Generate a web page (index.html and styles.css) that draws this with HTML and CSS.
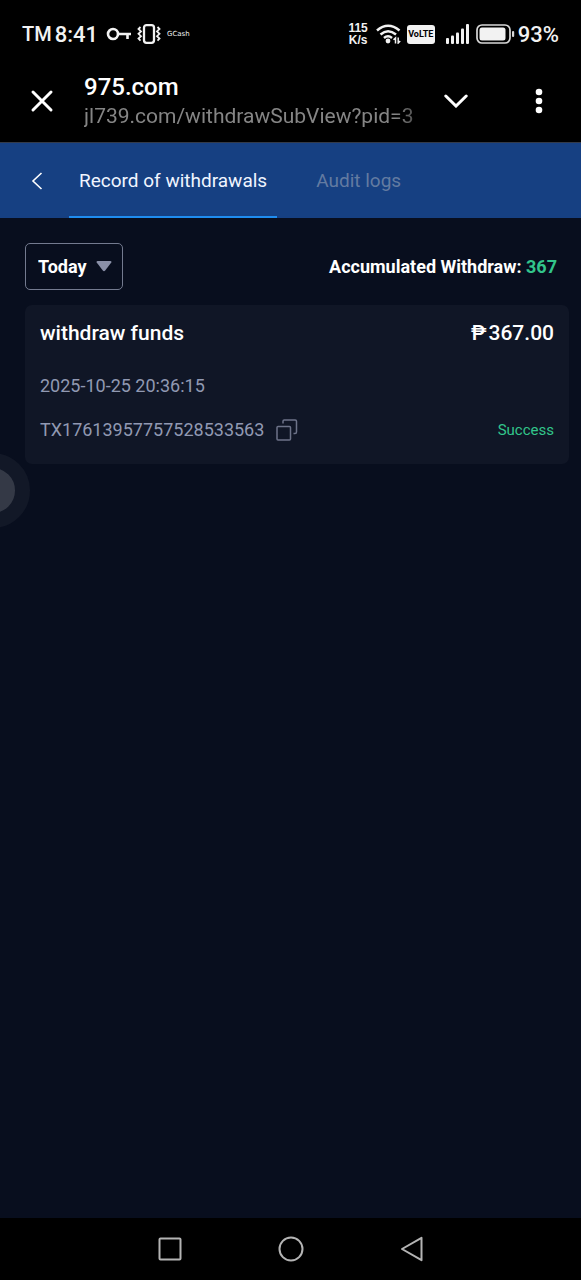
FILE: index.html
```html
<!DOCTYPE html>
<html lang="en">
<head>
<meta charset="utf-8">
<meta name="viewport" content="width=device-width, initial-scale=1">
<title>Record of withdrawals</title>
<link rel="stylesheet" href="styles.css">
</head>
<body>
<div class="screen">
  <div class="status-bar">
    <div class="status-left">
      <span class="carrier">TM</span>
      <span class="clock">8:41</span>
      <svg class="icon-key" width="26" height="14" viewBox="0 0 26 14" fill="none" stroke="#f2f2f2" stroke-width="2.6"><circle cx="7" cy="7" r="5"/><path d="M12 7H25M21.500 7v5"/></svg>
      <svg class="icon-vibrate" width="24" height="20" viewBox="0 0 24 20" fill="none" stroke="#f2f2f2"><rect x="7" y="1.200" width="10" height="17.600" rx="2.500" stroke-width="2.300"/><path d="M3.500 3l-2 2 2.500 2.400-2.500 2.400 2.500 2.400-2.500 2.400 2 2M20.500 3l2 2-2.500 2.400 2.500 2.400-2.500 2.400 2.500 2.400-2 2" stroke-width="1.800"/></svg>
      <span class="notice">GCash</span>
    </div>
    <div class="status-right">
      <span class="speed"><span>115</span><span>K/s</span></span>
      <svg class="icon-wifi" width="26" height="20" viewBox="0 0 26 20" fill="none" stroke="#f2f2f2" stroke-width="2.500"><path d="M1 6.500Q12 -3 23.500 6.500M4.500 10.500Q12 4 20 10.500M8 14Q12 10.500 16 14"/><circle cx="12" cy="17" r="2.400" fill="#f2f2f2" stroke="none"/><path d="M17.500 15.800l2-1.800v5.500M22.200 13.500v5.500l2-2" stroke-width="1.500"/></svg>
      <span class="volte">VoLTE</span>
      <svg class="icon-signal" width="23" height="20" viewBox="0 0 23 20" fill="#f2f2f2"><rect y="14" width="3" height="6" rx="1"/><rect x="5" y="11.500" width="3" height="8.500" rx="1"/><rect x="10" y="8.500" width="3" height="11.500" rx="1"/><rect x="15" y="4.500" width="3" height="15.500" rx="1"/><rect x="20" width="3" height="20" rx="1"/></svg>
      <svg class="icon-battery" width="39" height="20" viewBox="0 0 39 20"><rect x="1" y="1" width="33" height="18" rx="5" fill="none" stroke="#d8d8d8" stroke-width="1.700"/><rect x="3.500" y="3.500" width="26" height="13" rx="2.500" fill="#f2f2f2"/><rect x="36" y="7" width="2.200" height="6" rx="1" fill="#d8d8d8"/></svg>
      <span class="percent">93%</span>
    </div>
  </div>

  <header class="browser-bar">
    <button class="icon-button" aria-label="Close"><svg width="24" height="24" viewBox="0 0 24 24" fill="none" stroke="#fff" stroke-width="3" stroke-linecap="round"><path d="M3 3l18 18M21 3L3 21"/></svg></button>
    <div class="page-info">
      <div class="page-title">975.com</div>
      <div class="page-url">jl739.com/withdrawSubView?pid=3</div>
    </div>
    <button class="icon-button expand" aria-label="Expand"><svg width="24" height="14" viewBox="0 0 24 14" fill="none" stroke="#fff" stroke-width="3" stroke-linecap="round"><path d="M1.800 2L12 12 22.200 2"/></svg></button>
    <button class="icon-button" aria-label="More options"><svg width="8" height="26" viewBox="0 0 8 26" fill="#fff"><circle cx="4" cy="4" r="3.300"/><circle cx="4" cy="13" r="3.300"/><circle cx="4" cy="22" r="3.300"/></svg></button>
  </header>

  <nav class="tabs">
    <button class="back" aria-label="Back"><svg width="12" height="18" viewBox="0 0 12 18" fill="none" stroke="#fff" stroke-width="1.600"><path d="M10.500 1L2 9l8.500 8"/></svg></button>
    <button class="tab active">Record of withdrawals</button>
    <button class="tab">Audit logs</button>
  </nav>

  <main class="content">
    <div class="filters">
      <div class="period">
        <select class="period-select" aria-label="Period"><option>Today</option><option>Yesterday</option></select>
        <svg class="caret" width="16" height="11" viewBox="0 0 16 11" fill="#8a90a8"><path d="M1.500 0h13q1.500.3.800 1.600L9.200 9.500q-1.200 1.300-2.400 0L.7 1.600Q0 .3 1.500 0z"/></svg>
      </div>
      <p class="total">Accumulated Withdraw: <span class="amount">367</span></p>
    </div>

    <article class="record">
      <div class="row heading"><h2 class="kind">withdraw funds</h2><span class="sum"><span>₱</span><span>367.00</span></span></div>
      <time class="date">2025-10-25 20:36:15</time>
      <div class="row">
        <div class="reference"><span>TX17613957757528533563</span>
          <button class="copy" aria-label="Copy transaction number"><svg width="22" height="22" viewBox="0 0 22 22" fill="none" stroke="#6d7389" stroke-width="1.500"><rect x="1" y="7.500" width="13.500" height="13.500" rx="1"/><path d="M7 4.500V2.200Q7 1 8.200 1H19.200Q20.500 1 20.500 2.200V13Q20.500 14.500 19 14.500H17.500"/></svg></button>
        </div>
        <span class="state">Success</span>
      </div>
    </article>
  </main>

  <div class="system-nav">
    <button class="icon-button" aria-label="Recent apps"><svg width="26" height="26" viewBox="0 0 26 26" fill="none" stroke="#b4b4b4" stroke-width="2"><rect x="2.500" y="2.500" width="21" height="21" rx="1"/></svg></button>
    <button class="icon-button" aria-label="Home"><svg width="26" height="26" viewBox="0 0 26 26" fill="none" stroke="#b4b4b4" stroke-width="2"><circle cx="13" cy="13" r="11.500"/></svg></button>
    <button class="icon-button" aria-label="Go back"><svg width="26" height="26" viewBox="0 0 26 26" fill="none" stroke="#b4b4b4" stroke-width="2" stroke-linejoin="round"><path d="M22.500 1.800v22.400L3 13z"/></svg></button>
  </div>
  <button class="assist" aria-label="Assistive menu"></button>
</div>
</body>
</html>
```

FILE: styles.css
```css
* { box-sizing: border-box; }
body { margin: 0; background: #080e1e; color: #fff; font-family: Roboto, sans-serif; }
button { border: 0; padding: 0; background: none; color: inherit; font: inherit; }
svg { display: block; flex: none; }

.screen { position: relative; display: flex; flex-direction: column; min-height: 100vh; overflow: hidden; }

.status-bar { display: flex; justify-content: space-between; height: 68px; padding: 0 22px; background: #000; color: #f2f2f2; }
.status-left, .status-right { display: flex; align-items: center; }
.carrier { font-size: 20px; font-weight: 500; }
.clock, .percent { font-size: 22px; font-weight: 500; }
.clock { margin-left: 3px; }
.icon-key { margin-left: 8px; }
.icon-vibrate { margin-left: 5px; }
.notice { margin-left: 6px; font: 7px "DejaVu Sans", sans-serif; }
.speed { display: flex; flex-direction: column; align-items: center; font: 700 12px/12px "Liberation Sans", sans-serif; }
.icon-wifi { margin-left: 8px; }
.volte { margin-left: 5px; width: 28px; padding: 2px 0; border-radius: 3px; background: #f2f2f2; color: #000; font: 700 9px/15px Roboto, sans-serif; text-align: center; }
.icon-signal { margin-left: 11px; }
.icon-battery { margin-left: 7px; }
.percent { margin-left: 3px; }

.browser-bar { display: flex; align-items: center; height: 75px; padding: 0 22px 8px; border-bottom: 1px solid #333a48; background: #000; }
.icon-button { display: grid; place-items: center; width: 40px; height: 40px; }
.page-info { flex: 1; min-width: 0; margin-left: 22px; }
.page-title { font-size: 24px; font-weight: 500; line-height: 30px; }
.page-url { overflow: hidden; color: #858585; font-size: 21px; line-height: 28px; white-space: nowrap; -webkit-mask-image: linear-gradient(to right, #000 92%, transparent 106%); mask-image: linear-gradient(to right, #000 92%, transparent 106%); }
.expand { margin: 0 43px 0 14px; }

.tabs { display: flex; height: 75px; background: #164082; }
.back { display: grid; place-items: center; width: 69px; padding-left: 4px; }
.tab { padding: 2px 10px 0; border-bottom: 2px solid transparent; color: #637ba1; font-size: 19px; }
.tab + .tab { margin-left: 29px; }
.tab.active { border-color: #1f8df0; color: #f0f5ff; }

.content { flex: 1; padding: 25px 12px 25px 25px; }
.filters { display: flex; align-items: center; justify-content: space-between; padding-right: 12px; }
.period { position: relative; }
.period-select { width: 98px; height: 47px; padding: 0 30px 0 12px; border: 1px solid #737a8f; border-radius: 5px; appearance: none; background: transparent; color: #fff; font: 700 18px Roboto, sans-serif; }
.caret { position: absolute; top: 18px; right: 11px; pointer-events: none; }
.total { margin: 0; font-size: 18px; font-weight: 700; }
.amount { color: #32c58b; }

.record { margin-top: 15px; padding: 14px 15px 23px; border-radius: 7px; background: #101626; color: #9199b2; font-size: 18px; }
.row { display: flex; align-items: center; justify-content: space-between; }
.heading { color: #fff; font-size: 21px; line-height: 28px; }
.kind { margin: 0; font-size: 21px; font-weight: 500; }
.sum { display: flex; gap: 2px; font-weight: 500; }
.date { display: block; margin: 28px 0 22px; line-height: 22px; }
.reference { display: flex; align-items: center; gap: 12px; line-height: 22px; }
.state { color: #32c58b; font-size: 15px; }

.system-nav { display: flex; align-items: center; justify-content: center; gap: 81px; height: 62px; background: #000; }
.assist { position: absolute; top: 453px; left: -45px; width: 75px; height: 75px; border: 15px solid #121827; border-radius: 50%; background: #343946; }
```
